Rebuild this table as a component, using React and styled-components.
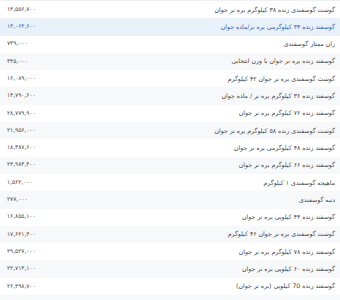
import styled, { createGlobalStyle } from 'styled-components';

const GlobalStyle = createGlobalStyle`
  html, body {
    margin: 0;
    padding: 0;
    background: #fff;
  }
`;

const Table = styled.div`
  width: 340px;
  border-top: 1px solid #eef0f3;
  font-family: 'DejaVu Sans', 'Noto Sans', sans-serif;
`;

const Row = styled.div`
  display: flex;
  align-items: center;
  height: 17.3px;
  padding: 0 5px 0 7px;
  line-height: 1;
  background: ${(props) => (props.$active ? '#e8f0fa' : props.$striped ? '#f7f8fa' : '#fff')};
  color: ${(props) => (props.$active ? '#3561ad' : '#444')};
`;

const Price = styled.span`
  direction: rtl;
  font-size: 5.8px;
  white-space: nowrap;
`;

const Name = styled.span`
  direction: rtl;
  margin-left: auto;
  font-size: 6.2px;
  white-space: nowrap;
`;

const products = [
  ['گوشت گوسفندی زنده ۳۸ کیلوگرم بره نر جوان', '۱۴,۵۵۶,۷۰۰'],
  ['گوسفند زنده ۳۴ کیلوگرمی بره نر/ماده جوان', '۱۳,۰۶۴,۶۰۰'],
  ['ران ممتاز گوسفندی', '۷۴۹,۰۰۰'],
  ['گوسفند زنده بره نر جوان با وزن انتخابی', '۳۴۵,۰۰۰'],
  ['گوشت گوسفندی بره نر جوان ۴۲ کیلوگرم', '۱۶,۰۸۹,۰۰۰'],
  ['گوسفند زنده ۳۶ کیلوگرم بره نر / ماده جوان', '۱۳,۷۹۰,۶۰۰'],
  ['گوسفند زنده ۷۶ کیلوگرم بره نر جوان', '۲۸,۷۷۹,۹۰۰'],
  ['گوشت گوسفندی زنده ۵۸ کیلوگرم بره نر جوان', '۲۱,۹۵۶,۰۰۰'],
  ['گوسفند زنده ۴۸ کیلوگرمی بره نر جوان', '۱۸,۳۸۷,۶۰۰'],
  ['گوسفند زنده ۶۶ کیلوگرم بره نر جوان', '۲۴,۹۸۴,۴۰۰'],
  ['ماهیچه گوسفندی ۱ کیلوگرم', '۱,۵۶۲,۰۰۰'],
  ['دنبه گوسفندی', '۲۷۷,۰۰۰'],
  ['گوسفند زنده ۴۴ کیلویی بره نر جوان', '۱۶,۸۵۵,۱۰۰'],
  ['گوشت گوسفندی بره نر جوان ۴۶ کیلوگرم', '۱۷,۶۲۱,۳۰۰'],
  ['گوسفند زنده ۷۸ کیلوگرم بره نر جوان', '۲۹,۵۲۷,۰۰۰'],
  ['گوسفند زنده ۶۰ کیلویی بره نر جوان', '۲۲,۷۱۳,۱۰۰'],
  ['گوسفند زنده 70 کیلویی (بره نر جوان)', '۲۶,۴۹۸,۷۰۰'],
  ['', ''],
];

export default function App() {
  return (
    <>
      <GlobalStyle />
      <Table>
        {products.map(([name, price], index) => (
          <Row key={index} $active={index === 1} $striped={index % 2 === 1}>
            <Price>{price}</Price>
            <Name>{name}</Name>
          </Row>
        ))}
      </Table>
    </>
  );
}
